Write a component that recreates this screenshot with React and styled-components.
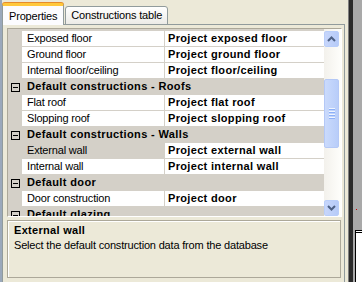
import React from "react";
import styled, { createGlobalStyle } from "styled-components";

const GlobalStyle = createGlobalStyle`
  html, body {
    margin: 0;
    padding: 0;
    background: #ece9d8;
    overflow: hidden;
  }
  body {
    font-family: "Liberation Sans", Arial, sans-serif;
    font-size: 11px;
    letter-spacing: -0.18px;
    color: #000;
  }
`;

const rows = [
  { name: "Exposed floor", value: "Project exposed floor" },
  { name: "Ground floor", value: "Project ground floor" },
  { name: "Internal floor/ceiling", value: "Project floor/ceiling" },
  { category: "Default constructions - Roofs" },
  { name: "Flat roof", value: "Project flat roof" },
  { name: "Slopping roof", value: "Project slopping roof" },
  { category: "Default constructions - Walls" },
  { name: "External wall", value: "Project external wall", selected: true },
  { name: "Internal wall", value: "Project internal wall" },
  { category: "Default door" },
  { name: "Door construction", value: "Project door" },
  { category: "Default glazing" },
];

const App = () => {
  return (
    <Screen>
      <GlobalStyle />
      <WindowEdge />
      <Main>
        <TabBar>
          <Tab $active>Properties</Tab>
          <Tab>Constructions table</Tab>
        </TabBar>
        <TabPanel>
          <Grid>
            <RowsArea>
              {rows.map((r, i) =>
                r.category ? (
                  <CategoryRow key={i}>
                    <Gutter>
                      <Collapse>
                        <span />
                      </Collapse>
                    </Gutter>
                    <CategoryLabel>{r.category}</CategoryLabel>
                  </CategoryRow>
                ) : (
                  <PropRow key={i}>
                    <Gutter />
                    <NameCell $selected={r.selected}>{r.name}</NameCell>
                    <ValueCell>{r.value}</ValueCell>
                  </PropRow>
                )
              )}
            </RowsArea>
            <ScrollBar>
              <ScrollButton>
                <Arrow viewBox="0 0 9 6">
                  <path d="M1 5 L4.5 1.5 L8 5" />
                </Arrow>
              </ScrollButton>
              <Track>
                <Thumb>
                  <Grip />
                  <Grip />
                  <Grip />
                  <Grip />
                </Thumb>
              </Track>
              <ScrollButton>
                <Arrow viewBox="0 0 9 6">
                  <path d="M1 1 L4.5 4.5 L8 1" />
                </Arrow>
              </ScrollButton>
            </ScrollBar>
          </Grid>
          <Description>
            <DescTitle>External wall</DescTitle>
            <DescText>Select the default construction data from the database</DescText>
          </Description>
        </TabPanel>
      </Main>
      <RightStrip>
        <DarkBar />
        <OtherWindow>
          <RedDot />
          <OtherBox />
        </OtherWindow>
      </RightStrip>
    </Screen>
  );
};

const Screen = styled.div`
  width: 362px;
  height: 282px;
  display: flex;
  background: #ece9d8;
`;

const WindowEdge = styled.div`
  width: 2px;
  background: #9aa8bb;
`;

const Main = styled.div`
  width: 343px;
  display: flex;
  flex-direction: column;
  padding-top: 3px;
`;

const TabBar = styled.div`
  display: flex;
  align-items: flex-end;
  height: 22px;
  position: relative;
  z-index: 1;
`;

const Tab = styled.div`
  box-sizing: border-box;
  height: ${(p) => (p.$active ? "22px" : "19px")};
  padding: ${(p) => (p.$active ? "4px 6px 0 6px" : "2px 5px 0 5px")};
  border: 1px solid #919b9c;
  border-bottom: ${(p) => (p.$active ? "none" : "1px solid #919b9c")};
  border-top: ${(p) => (p.$active ? "3px solid #ffc83c" : "1px solid #919b9c")};
  box-shadow: ${(p) => (p.$active ? "0 -1px 0 #e68b2c" : "none")};
  border-radius: 3px 3px 0 0;
  background: ${(p) =>
    p.$active ? "#fcfcfe" : "linear-gradient(#ffffff, #ecebe6)"};
  margin-left: ${(p) => (p.$active ? "0" : "1px")};
  white-space: nowrap;
  line-height: 13px;
`;

const TabPanel = styled.div`
  box-sizing: border-box;
  flex: 1;
  margin-top: -1px;
  border: 1px solid #919b9c;
  border-bottom: none;
  background: #ece9d8;
  padding: 3px 2px 4px 4px;
  display: flex;
  flex-direction: column;
  gap: 3px;
`;

const Grid = styled.div`
  height: 187px;
  display: flex;
  border: 1px solid;
  border-color: #aca899 #ffffff #ffffff #aca899;
  background: #d4d0c8;
  overflow: hidden;
`;

const RowsArea = styled.div`
  flex: 1;
  padding-top: 2px;
  overflow: hidden;
`;

const PropRow = styled.div`
  display: grid;
  grid-template-columns: 14px 143px 1fr;
  height: 16px;
`;

const CategoryRow = styled.div`
  display: grid;
  grid-template-columns: 14px 1fr;
  height: 16px;
  background: #d4d0c8;
`;

const Gutter = styled.div`
  background: #d4d0c8;
  display: flex;
  align-items: center;
  justify-content: center;
`;

const Collapse = styled.div`
  width: 7px;
  height: 7px;
  border: 1px solid #000;
  display: flex;
  align-items: center;
  justify-content: center;

  span {
    width: 5px;
    height: 1px;
    background: #000;
  }
`;

const NameCell = styled.div`
  box-sizing: border-box;
  background: ${(p) => (p.$selected ? "#d4d0c8" : "#ffffff")};
  border-bottom: 1px solid #d4d0c8;
  border-right: 1px solid #d4d0c8;
  padding: 1px 0 0 5px;
  line-height: 13px;
  white-space: nowrap;
  overflow: hidden;
`;

const ValueCell = styled.div`
  box-sizing: border-box;
  background: #ffffff;
  border-bottom: 1px solid #d4d0c8;
  padding: 1px 0 0 3px;
  line-height: 13px;
  font-weight: bold;
  letter-spacing: 0.33px;
  white-space: nowrap;
  overflow: hidden;
`;

const CategoryLabel = styled.div`
  padding: 1px 0 0 5px;
  line-height: 13px;
  font-weight: bold;
  letter-spacing: 0.36px;
  white-space: nowrap;
`;

const ScrollBar = styled.div`
  width: 17px;
  display: flex;
  flex-direction: column;
  background: linear-gradient(90deg, #f3f1ec, #fefefb);
  padding-top: 2px;
`;

const ScrollButton = styled.div`
  box-sizing: border-box;
  height: 16px;
  margin: 0 2px 0 0;
  border: 1px solid #b9cefa;
  border-radius: 2px;
  background: linear-gradient(90deg, #c7d6fb, #b6cbf8);
  display: flex;
  align-items: center;
  justify-content: center;
`;

const Arrow = styled.svg`
  width: 9px;
  height: 6px;

  path {
    fill: none;
    stroke: #4d6185;
    stroke-width: 2;
  }
`;

const Track = styled.div`
  flex: 1;
  padding-top: 32px;
`;

const Thumb = styled.div`
  box-sizing: border-box;
  height: 69px;
  margin-right: 2px;
  border: 1px solid #b4c8f6;
  border-radius: 2px;
  background: linear-gradient(90deg, #cadafc, #b8cdf9);
  display: flex;
  flex-direction: column;
  align-items: center;
  justify-content: center;
  gap: 1px;
`;

const Grip = styled.div`
  width: 6px;
  height: 1px;
  background: #eef4fe;
  border-bottom: 1px solid #8cb0f8;
`;

const Description = styled.div`
  box-sizing: border-box;
  height: 58px;
  margin-right: 1px;
  border: 1px solid #aca899;
  box-shadow: inset 1px 1px 0 #ffffff;
  padding: 2px 6px;
`;

const DescTitle = styled.div`
  font-weight: bold;
  letter-spacing: 0.3px;
  line-height: 14px;
`;

const DescText = styled.div`
  line-height: 14px;
  margin-top: 1px;
  white-space: nowrap;
`;

const RightStrip = styled.div`
  flex: 1;
  display: flex;
  padding-left: 3px;
`;

const DarkBar = styled.div`
  width: 4px;
  background: #2b2b2b;
  border-left: 1px solid #808080;
`;

const OtherWindow = styled.div`
  flex: 1;
  position: relative;
  background: #a9a9a9;
  display: flex;
  flex-direction: column;
  justify-content: flex-end;
  padding-left: 2px;
`;

const RedDot = styled.div`
  position: absolute;
  left: 3px;
  top: 209px;
  width: 1px;
  height: 1px;
  background: #d00000;
`;

const OtherBox = styled.div`
  height: 49px;
  background: #ffffff;
  border-left: 1px solid #000;
  border-top: 3px double #000;
`;

export default App;
